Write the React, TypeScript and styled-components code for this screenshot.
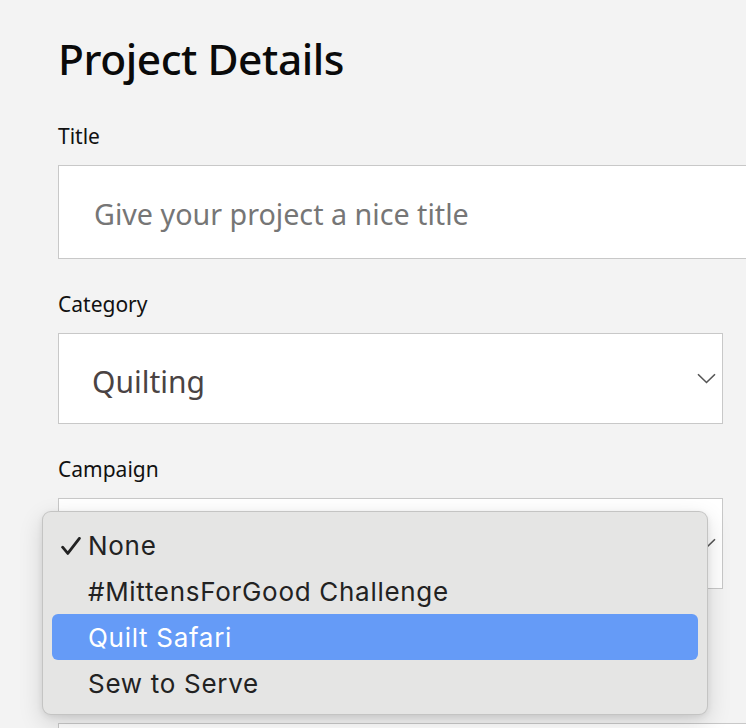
import React from "react";
import styled, { createGlobalStyle } from "styled-components";

const GlobalStyle = createGlobalStyle`
  html, body {
    margin: 0;
    padding: 0;
    background: #f3f3f3;
    overflow: hidden;
  }
  body {
    font-family: "Noto Sans", "Open Sans", sans-serif;
  }
`;

const Page = styled.div`
  padding: 33px 0 0 58px;
  width: 746px;
  height: 728px;
  box-sizing: border-box;
  overflow: hidden;
`;

const Heading = styled.h1`
  margin: 0 0 39px;
  font-size: 42.5px;
  line-height: 52px;
  font-weight: 500;
  color: #0a0a0a;
  letter-spacing: -0.45px;
`;

const Field = styled.div<{ $offset?: number }>`
  position: relative;
  padding-top: ${(p) => p.$offset ?? 0}px;
  & + & {
    margin-top: 33px;
  }
`;

const Label = styled.label`
  display: block;
  font-size: 21px;
  line-height: 24px;
  color: #111;
  margin-bottom: 17px;
`;

const TextInput = styled.input`
  display: block;
  box-sizing: border-box;
  width: 720px;
  height: 94px;
  padding: 2px 0 0 35px;
  border: 1px solid #c8c8c8;
  border-radius: 0;
  background: #fff;
  font-family: "Noto Sans", "Open Sans", sans-serif;
  font-size: 28.7px;
  color: #333;
  outline: none;
  &::placeholder {
    color: #767676;
  }
`;

const SelectBox = styled.div`
  box-sizing: border-box;
  width: 665px;
  height: 91px;
  display: flex;
  align-items: center;
  justify-content: space-between;
  padding: 0 6px 0 33px;
  border: 1px solid #c8c8c8;
  background: #fff;
`;

const SelectValue = styled.span`
  padding-top: 6px;
  font-size: 30px;
  color: #4a4343;
`;

const Chevron = () => (
  <svg width="19" height="11" viewBox="0 0 19 11" fill="none">
    <path d="M1 1.2 L9.5 9.5 L18 1.2" stroke="#555" strokeWidth="1.6" />
  </svg>
);

const Menu = styled.ul`
  position: absolute;
  left: -16px;
  top: 54px;
  width: 666px;
  box-sizing: border-box;
  margin: 0;
  padding: 10px 9px 8px;
  list-style: none;
  background: #e5e5e4;
  border: 1px solid rgba(0, 0, 0, 0.14);
  border-radius: 9px;
  box-shadow: 0 8px 24px rgba(0, 0, 0, 0.14), 0 2px 6px rgba(0, 0, 0, 0.08);
  font-family: Inter, "Liberation Sans", sans-serif;
  z-index: 10;
`;

const MenuItem = styled.li<{ $active?: boolean }>`
  display: flex;
  align-items: center;
  height: 46px;
  padding: 2px 0 0 9px;
  box-sizing: border-box;
  border-radius: 6px;
  font-size: 26px;
  letter-spacing: 0.7px;
  line-height: 44px;
  background: ${(p) => (p.$active ? "#659bf7" : "transparent")};
  color: ${(p) => (p.$active ? "#fff" : "#222")};
`;

const CheckSlot = styled.span`
  width: 27px;
  flex: none;
  display: flex;
  align-items: center;
`;

const CheckMark = () => (
  <svg width="20" height="18" viewBox="0 0 20 18" fill="none">
    <path
      d="M1.6 10.2 L6.8 16.4 L18.4 1.4"
      stroke="#222"
      strokeWidth="2.8"
      strokeLinecap="round"
      strokeLinejoin="round"
    />
  </svg>
);

const campaigns = [
  "None",
  "#MittensForGood Challenge",
  "Quilt Safari",
  "Sew to Serve",
];

export default function App() {
  return (
    <>
      <GlobalStyle />
      <Page>
        <Heading>Project Details</Heading>
        <Field>
          <Label>Title</Label>
          <TextInput placeholder="Give your project a nice title" />
        </Field>
        <Field>
          <Label>Category</Label>
          <SelectBox>
            <SelectValue>Quilting</SelectValue>
            <Chevron />
          </SelectBox>
        </Field>
        <Field>
          <Label>Campaign</Label>
          <SelectBox>
            <SelectValue />
            <Chevron />
          </SelectBox>
          <Menu>
            {campaigns.map((c, i) => (
              <MenuItem key={c} $active={i === 2}>
                <CheckSlot>{i === 0 && <CheckMark />}</CheckSlot>
                {c}
              </MenuItem>
            ))}
          </Menu>
        </Field>
        <Field $offset={101}>
          <TextInput />
        </Field>
      </Page>
    </>
  );
}
